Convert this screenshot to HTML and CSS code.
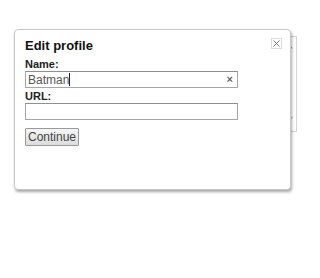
FILE: index.html
```html
<!DOCTYPE html>
<html lang="en">
<head>
  <meta charset="UTF-8" />
  <title>Edit profile</title>
  <link rel="stylesheet" href="styles.css">
</head>
<body>
  <div class="page">
    <div class="backdrop-box">
      <span class="scroll-up">&#8963;</span>
      <span class="scroll-down">&#8964;</span>
    </div>

    <div class="dialog">
      <button class="dialog-close" title="Close">
        <svg width="7" height="7" viewBox="0 0 7 7"><path d="M0.5 0.5L6.5 6.5M6.5 0.5L0.5 6.5" stroke="#777" stroke-width="1"/></svg>
      </button>
      <h2 class="dialog-title">Edit profile</h2>
      <label class="field-label">Name:</label>
      <div class="field">
        <span class="field-value">Batman</span><span class="caret"></span>
        <span class="field-clear">&times;</span>
      </div>
      <label class="field-label">URL:</label>
      <div class="field"></div>
      <button class="continue-btn">Continue</button>
    </div>
  </div>
</body>
</html>
```

FILE: styles.css
```css
body {
  margin: 0;
  background: #fff;
  font-family: "Liberation Sans", Arial, sans-serif;
  color: #222;
}

.page {
  position: relative;
  width: 320px;
  height: 278px;
  overflow: hidden;
}

.backdrop-box {
  position: relative;
  margin: 36px 0 0 200px;
  width: 95px;
  height: 94px;
  border: 1px solid #d4d4d4;
}

.scroll-up,
.scroll-down {
  position: absolute;
  right: 1px;
  font-size: 9px;
  color: #999;
}

.scroll-up {
  top: 8px;
}

.scroll-down {
  bottom: 10px;
}

.dialog {
  position: absolute;
  left: 14px;
  top: 29px;
  width: 255px;
  height: 151px;
  padding: 8px 10px 0 10px;
  background: #fff;
  border: 1px solid #c8c8c8;
  border-radius: 4px;
  box-shadow: 1px 2px 3px rgba(0, 0, 0, 0.35);
}

.dialog-close {
  position: absolute;
  right: 8px;
  top: 8px;
  width: 11px;
  height: 11px;
  padding: 0;
  border: 1px solid #dcdcdc;
  background: #fff;
  display: flex;
  align-items: center;
  justify-content: center;
}

.dialog-title {
  margin: 0 0 4px 0;
  font-size: 13px;
  line-height: 16px;
  font-weight: bold;
  color: #111;
}

.field-label {
  display: block;
  font-size: 11px;
  line-height: 13px;
  font-weight: bold;
  color: #222;
}

.field {
  position: relative;
  display: flex;
  align-items: center;
  width: 209px;
  height: 15px;
  border: 1px solid #a6a6a6;
  border-top-color: #8f8f8f;
  margin: 0 0 2px 0;
  padding-left: 2px;
  box-sizing: content-box;
}

.field-value {
  font-size: 12px;
  color: #555;
}

.caret {
  width: 1px;
  height: 13px;
  background: #222;
}

.field-clear {
  position: absolute;
  right: 4px;
  top: 0;
  font-size: 11px;
  line-height: 15px;
  font-weight: bold;
  color: #666;
}

.continue-btn {
  margin-top: 6px;
  width: 54px;
  height: 18px;
  padding: 0;
  font-family: "Liberation Sans", Arial, sans-serif;
  font-size: 12px;
  color: #444;
  border: 1px solid #9a9a9a;
  border-radius: 1px;
  background: linear-gradient(to bottom, #f6f6f6, #dcdcdc);
}
```
